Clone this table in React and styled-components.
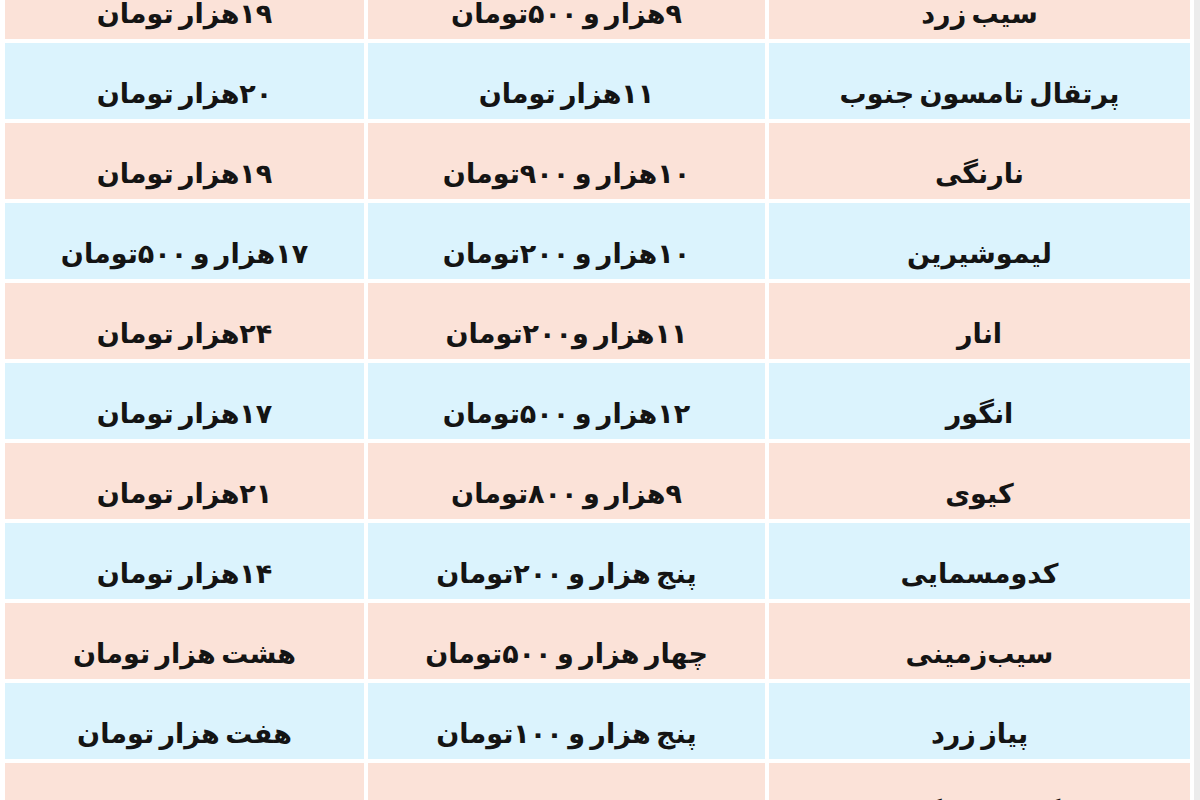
import React from 'react'
import styled, { createGlobalStyle } from 'styled-components'

const GlobalStyle = createGlobalStyle`
  html, body {
    margin: 0;
    padding: 0;
    background: #ffffff;
  }
  body {
    font-family: "DejaVu Sans", "Noto Sans", sans-serif;
    overflow: hidden;
  }
`;

const Page = styled.div`
  width: 1200px;
  height: 800px;
  overflow: hidden;
  box-sizing: border-box;
  padding-left: 5px;
  padding-right: 4px;
  border-right: 6px solid #ececec;
  background: #ffffff;
`;

const Table = styled.div`
  direction: rtl;
  display: flex;
  flex-direction: column;
  gap: 4px;
  margin-top: -37px;
`;

const Row = styled.div`
  display: grid;
  grid-template-columns: 421px 397px 1fr;
  gap: 4px;
  height: 76px;
`;

const Cell = styled.div`
  display: flex;
  align-items: center;
  justify-content: center;
  padding-top: 24px;
  box-sizing: border-box;
  background: ${p => (p.$tone === 'blue' ? '#dbf3fd' : '#fbe2d8')};
  color: #141414;
  font-size: 27px;
  font-weight: bold;
  word-spacing: -4px;
  white-space: nowrap;
`;

const rows = [
  ['سیب زرد', '۹هزار و ۵۰۰تومان', '۱۹هزار تومان'],
  ['پرتقال تامسون جنوب', '۱۱هزار تومان', '۲۰هزار تومان'],
  ['نارنگی', '۱۰هزار و ۹۰۰تومان', '۱۹هزار تومان'],
  ['لیموشیرین', '۱۰هزار و ۲۰۰تومان', '۱۷هزار و ۵۰۰تومان'],
  ['انار', '۱۱هزار و۲۰۰تومان', '۲۴هزار تومان'],
  ['انگور', '۱۲هزار و ۵۰۰تومان', '۱۷هزار تومان'],
  ['کیوی', '۹هزار و ۸۰۰تومان', '۲۱هزار تومان'],
  ['کدومسمایی', 'پنج هزار و ۲۰۰تومان', '۱۴هزار تومان'],
  ['سیب‌زمینی', 'چهار هزار و ۵۰۰تومان', 'هشت هزار تومان'],
  ['پیاز زرد', 'پنج هزار و ۱۰۰تومان', 'هفت هزار تومان'],
  ['گوجه فرنگی', 'شش هزار و ۵۰۰تومان', 'یازده هزار تومان'],
];

const App = () => (
  <>
    <GlobalStyle />
    <Page>
      <Table>
        {rows.map((r, i) => (
          <Row key={i}>
            {r.map((t, j) => (
              <Cell key={j} $tone={i % 2 ? 'blue' : 'pink'}>{t}</Cell>
            ))}
          </Row>
        ))}
      </Table>
    </Page>
  </>
)

export default App
